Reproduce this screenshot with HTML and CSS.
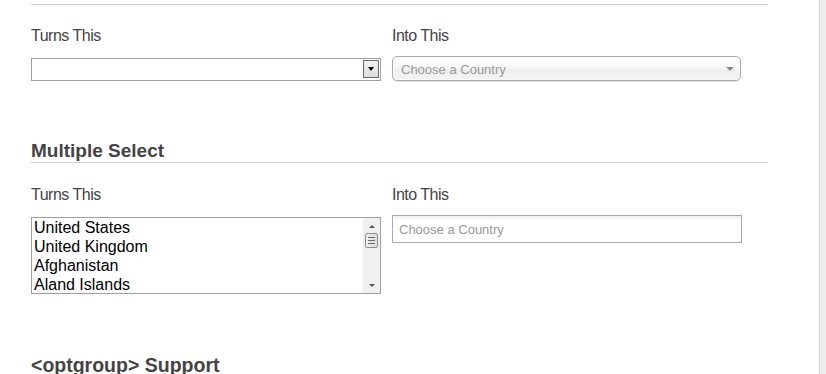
FILE: index.html
```html
<!DOCTYPE html>
<html lang="en">
  <head>
    <meta charset="UTF-8" />
    <title>Chosen demo</title>
    <link rel="stylesheet" href="styles.css">
  </head>
  <body>
    <div class="page">
      <div class="content">
        <div class="section first">
          <div class="side-by-side">
            <div class="col">
              <div class="label">Turns This</div>
              <div class="native-select">
                <span class="native-value"></span>
                <span class="native-btn"><i class="tri-down"></i></span>
              </div>
            </div>
            <div class="col">
              <div class="label">Into This</div>
              <div class="chzn-single">
                <span>Choose a Country</span>
                <i class="chzn-arrow"></i>
              </div>
            </div>
          </div>
        </div>

        <div class="section">
          <h2>Multiple Select</h2>
          <div class="side-by-side">
            <div class="col">
              <div class="label">Turns This</div>
              <div class="listbox">
                <ul class="options">
                  <li>United States</li>
                  <li>United Kingdom</li>
                  <li>Afghanistan</li>
                  <li>Aland Islands</li>
                </ul>
                <div class="scrollbar">
                  <span class="sb-arrow up"></span>
                  <span class="sb-thumb">
                    <i></i><i></i><i></i>
                  </span>
                  <span class="sb-track"></span>
                  <span class="sb-arrow down"></span>
                </div>
              </div>
            </div>
            <div class="col">
              <div class="label">Into This</div>
              <div class="chzn-multi">
                <span>Choose a Country</span>
              </div>
            </div>
          </div>
        </div>

        <div class="section">
          <h2 class="plain">&lt;optgroup&gt; Support</h2>
        </div>
      </div>
      <div class="gutter"></div>
    </div>
  </body>
</html>
```

FILE: styles.css
```css
html,
body {
  margin: 0;
  height: 100%;
  overflow: hidden;
  background: #ffffff;
}

body {
  font-family: "Liberation Sans", Arial, sans-serif;
  color: #444;
}

.page {
  display: flex;
  height: 374px;
}

.content {
  flex: 1;
  padding: 4px 0 0 31px;
}

.gutter {
  width: 6px;
  border-left: 1px solid #d4d4d4;
  background: #efefef;
}

.section {
  width: 737px;
}

.section.first {
  border-top: 1px solid #cfcfcf;
  padding-top: 22px;
}

h2 {
  margin: 59px 0 0;
  font-size: 19px;
  line-height: 22px;
  font-weight: bold;
  color: #444;
  border-bottom: 1px solid #cfcfcf;
  padding-bottom: 0;
}

h2 + .side-by-side {
  padding-top: 23px;
}

h2.plain {
  margin-top: 60px;
  font-size: 19.5px;
  border-bottom: none;
}

.side-by-side {
  display: flex;
}

.col {
  width: 361px;
}

.label {
  font-size: 16px;
  letter-spacing: -0.5px;
  line-height: 18px;
  margin-bottom: 13px;
  color: #444;
}

/* native (old windows style) select */
.native-select {
  display: flex;
  width: 348px;
  height: 21px;
  margin-top: 2px;
  border: 1px solid #a0a0a0;
  background: #fff;
}

.native-value {
  flex: 1;
}

.native-btn {
  width: 16px;
  height: 18px;
  margin: 1px 1px 0 0;
  border: 1px solid #6b6b6b;
  box-sizing: border-box;
  background: linear-gradient(#f4f4f4, #dcdcdc);
  display: flex;
  align-items: center;
  justify-content: center;
}

.tri-down {
  width: 0;
  height: 0;
  border-left: 3px solid transparent;
  border-right: 3px solid transparent;
  border-top: 4px solid #000;
}

/* chosen single */
.chzn-single {
  position: relative;
  width: 339px;
  height: 23px;
  margin-top: -2px;
  line-height: 25px;
  padding-left: 8px;
  border: 1px solid #aaa;
  border-radius: 5px;
  background: linear-gradient(#ffffff 20%, #f6f6f6 50%, #eeeeee 52%, #f4f4f4 100%);
  box-shadow: 0 0 3px #fff inset, 0 1px 1px rgba(0, 0, 0, 0.1);
  font-size: 13px;
  color: #999;
}

.chzn-arrow {
  position: absolute;
  right: 6px;
  top: 10px;
  width: 0;
  height: 0;
  border-left: 4px solid transparent;
  border-right: 4px solid transparent;
  border-top: 4px solid #888;
}

/* listbox */
.listbox {
  display: flex;
  width: 348px;
  height: 75px;
  margin-top: 1px;
  border: 1px solid #a0a0a0;
  background: #fff;
}

.options {
  flex: 1;
  list-style: none;
  margin: 0;
  padding: 0 0 0 2px;
  font-size: 16px;
  line-height: 19px;
  color: #000;
}

.scrollbar {
  width: 17px;
  background: #f0f0f0;
  display: flex;
  flex-direction: column;
  align-items: center;
  border-left: 1px solid #f6f6f6;
}

.sb-arrow {
  width: 0;
  height: 0;
  margin: 7px 0 5px;
  border-left: 3px solid transparent;
  border-right: 3px solid transparent;
}

.sb-arrow.up {
  border-bottom: 3px solid #555;
}

.sb-arrow.down {
  margin: 4px 0 6px;
  border-top: 3px solid #555;
}

.sb-thumb {
  width: 13px;
  height: 15px;
  box-sizing: border-box;
  border: 1px solid #8f8f8f;
  border-radius: 2px;
  background: linear-gradient(90deg, #f0f0f0, #dedede);
  display: flex;
  flex-direction: column;
  justify-content: center;
  align-items: center;
  gap: 2px;
}

.sb-thumb i {
  display: block;
  width: 7px;
  height: 1px;
  background: #6a6a6a;
}

.sb-track {
  flex: 1;
}

/* chosen multi */
.chzn-multi {
  width: 342px;
  height: 26px;
  line-height: 27px;
  margin-top: -2px;
  padding-left: 6px;
  border: 1px solid #aaa;
  background: linear-gradient(#eeeeee 1%, #ffffff 15%);
  font-size: 13px;
  color: #999;
}
```
